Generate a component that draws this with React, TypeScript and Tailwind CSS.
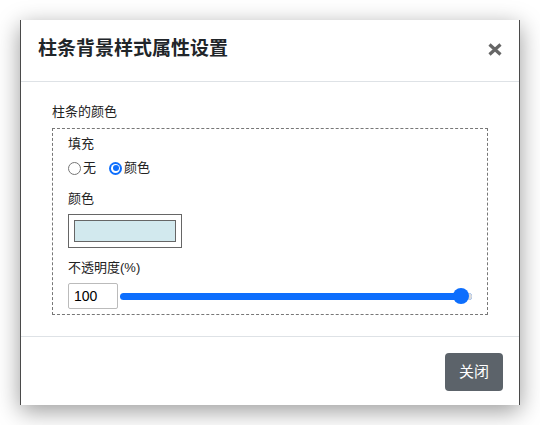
import React, { useState } from 'react';

const font = { fontFamily: '"Liberation Sans", "Noto Sans CJK SC", sans-serif' };

const Radio: React.FC<{ checked: boolean; label: string; onClick: () => void }> = ({ checked, label, onClick }) => (
  <label className="flex items-center cursor-pointer" onClick={onClick}>
    {checked ? (
      <span className="w-[13px] h-[13px] rounded-full bg-[#0d6efd] flex items-center justify-center">
        <span className="w-[9px] h-[9px] rounded-full bg-white flex items-center justify-center">
          <span className="w-[6px] h-[6px] rounded-full bg-[#0d6efd]" />
        </span>
      </span>
    ) : (
      <span className="w-[13px] h-[13px] rounded-full border border-[#767676] bg-white" />
    )}
    <span className="ml-[2px] text-[13px] leading-[18px] text-[#222]">{label}</span>
  </label>
);

const App: React.FC = () => {
  const [fill, setFill] = useState<'none' | 'color'>('color');

  return (
    <div className="w-[540px] h-[425px] bg-white pt-[20px] pl-[20px]" style={font}>
      <div className="w-[500px] h-[385px] bg-white border-x border-[#4a4a4a] shadow-[0_6px_22px_rgba(0,0,0,0.4)] flex flex-col">
        <div className="h-[62px] border-b border-[#dee2e6] flex items-center justify-between pl-[17px] pr-[17px]">
          <h2 className="text-[19px] font-bold text-[#212529] mt-[-3px]">柱条背景样式属性设置</h2>
          <button className="w-[14px] h-[13px] mt-[-3px] cursor-pointer">
            <svg width="14" height="13" viewBox="0 0 14 13">
              <path d="M1.5 1.5 L12.5 11.5 M12.5 1.5 L1.5 11.5" stroke="#666" strokeWidth="3.2" strokeLinecap="butt" />
            </svg>
          </button>
        </div>

        <div className="px-[31px] pt-[21px] pb-[21px]">
          <div className="text-[13px] leading-[18px] text-[#222]">柱条的颜色</div>
          <div className="mt-[7px] border border-dashed border-[#777] pl-[15px] pr-[15px] pt-[6px] pb-[5px]">
            <div className="text-[13px] leading-[18px] text-[#222]">填充</div>
            <div className="mt-[6px] h-[18px] flex items-center gap-[13px]">
              <Radio checked={fill === 'none'} label="无" onClick={() => setFill('none')} />
              <Radio checked={fill === 'color'} label="颜色" onClick={() => setFill('color')} />
            </div>
            <div className="mt-[13px] text-[13px] leading-[18px] text-[#222]">颜色</div>
            <div className="mt-[6px] w-[114px] h-[34px] border border-[#666] p-[5px]">
              <div className="w-full h-full border border-[#666] bg-[#d2e9ee]" />
            </div>
            <div className="mt-[11px] text-[13px] leading-[18px] text-[#222]">不透明度(%)</div>
            <div className="mt-[6px] flex items-center">
              <input
                className="w-[50px] h-[26px] border border-[#bbb] rounded-[2px] px-[5px] text-[14px] text-black outline-none"
                defaultValue="100"
                style={font}
              />
              <div className="relative w-[353px] ml-[2px] h-[16px] flex items-center">
                <div className="w-full h-[7px] rounded-full bg-[#0d6efd]" />
                <div className="absolute right-0 w-[9px] h-[7px] rounded-r-full bg-[#dcdcdc]" />
                <div className="absolute right-[3px] w-[16px] h-[16px] rounded-full bg-[#0d6efd]" />
              </div>
            </div>
          </div>
        </div>

        <div className="border-t border-[#dee2e6] flex justify-end pt-[16px] pr-[16px]">
          <button className="w-[58px] h-[38px] rounded-[4px] bg-[#5c636a] text-white text-[15px] cursor-pointer">关闭</button>
        </div>
      </div>
    </div>
  );
};

export default App;
